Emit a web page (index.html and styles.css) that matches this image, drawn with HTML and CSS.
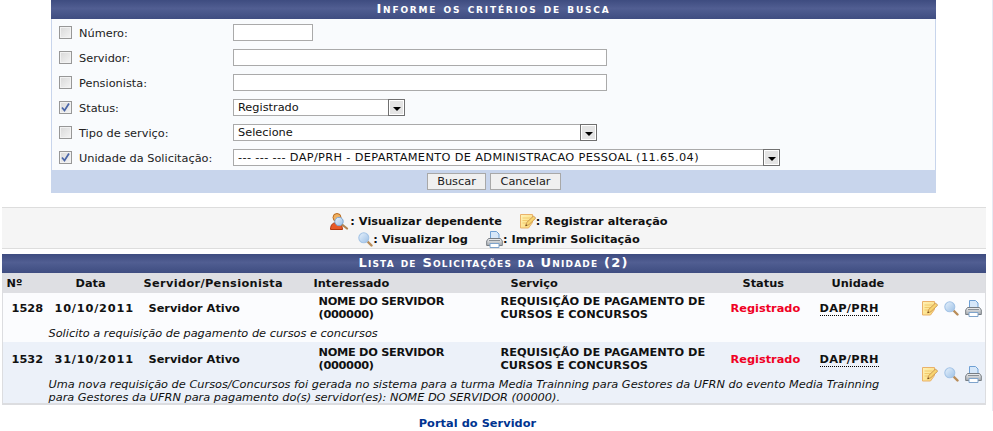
FILE: index.html
```html
<!DOCTYPE html>
<html lang="pt-BR">
<head>
<meta charset="utf-8">
<title>Lista de Solicitações</title>
<link rel="stylesheet" href="styles.css">
</head>
<body>
<svg class="defs" width="0" height="0" aria-hidden="true">
  <defs>
    <linearGradient id="lens" x1="0" y1="0" x2="1" y2="1"><stop offset="0" stop-color="#e8f2fc"/><stop offset="1" stop-color="#9cc0e6"/></linearGradient>
    <linearGradient id="note" x1="0" y1="0" x2="1" y2="1"><stop offset="0" stop-color="#fff3b8"/><stop offset="1" stop-color="#fad873"/></linearGradient>
    <linearGradient id="body" x1="0" y1="0" x2="0" y2="1"><stop offset="0" stop-color="#f0f2f4"/><stop offset="1" stop-color="#a4a9ae"/></linearGradient>
    <symbol id="i-note" viewBox="0 0 16 16">
      <path d="M.5 1.500h12v8l-4 5.500h-8z" fill="url(#note)" stroke="#eab26a"/>
      <path d="M2.500 5h8M2.500 7.500h6M2.500 10h4" stroke="#f2ca6c" fill="none"/>
      <path d="M5.500 13l1.200-3.500 6.800-6.500 2.200 2.200-6.800 6.500z" fill="#f8d470" stroke="#c08a48" stroke-width=".8"/>
      <path d="M5.500 13l.6-1.800 1.200 1.200z" fill="#5a3410"/>
    </symbol>
    <symbol id="i-lens" viewBox="0 0 15 15">
      <path d="M9.500 9.500l4 4" stroke="#b88c58" stroke-width="2.400" stroke-linecap="round"/>
      <circle cx="5.800" cy="5.800" r="5" fill="url(#lens)" stroke="#a4c4e6" stroke-width="1.100"/>
    </symbol>
    <symbol id="i-print" viewBox="0 0 17 17">
      <path d="M4.500.5h6l2.500 2.500v5h-8.500z" fill="#d6e7f9" stroke="#6fa0d4"/>
      <path d="M2.500 7.500h12l1.800 2.500v4.500h-15.600v-4.500z" fill="url(#body)" stroke="#777d83"/>
      <path d="M4 12.500h9v4h-9z" fill="#fff" stroke="#7fa4cc"/>
      <path d="M3 9.500h11" stroke="#8a9096"/>
    </symbol>
    <symbol id="i-user" viewBox="0 0 20 17">
      <circle cx="7" cy="4.500" r="4" fill="#f0b060" stroke="#b86a20"/>
      <path d="M.5 16.500c0-5 2.500-7 6.500-7s5 2 5.500 7z" fill="#e85a28" stroke="#b03810"/>
      <path d="M12 11.500l5 4" stroke="#b08450" stroke-width="2.200" stroke-linecap="round"/>
      <circle cx="9" cy="8.500" r="4.200" fill="url(#lens)" stroke="#7da6d2"/>
    </symbol>
  </defs>
</svg>

<div class="page">
  <form class="search">
    <h2 class="caption">Informe os critérios de busca</h2>
    <div class="field">
      <span class="cb"></span><label>Número:</label>
      <input class="text w-num" type="text">
    </div>
    <div class="field">
      <span class="cb"></span><label>Servidor:</label>
      <input class="text w-long" type="text">
    </div>
    <div class="field">
      <span class="cb"></span><label>Pensionista:</label>
      <input class="text w-long" type="text">
    </div>
    <div class="field">
      <span class="cb"><svg class="check" viewBox="0 0 9 9"><path d="M1 4.500l2.500 3L8 .5" fill="none" stroke="#4a66a8" stroke-width="1.700"/></svg></span><label>Status:</label>
      <div class="select w-status"><span class="value">Registrado</span><span class="arrow"><i></i></span></div>
    </div>
    <div class="field">
      <span class="cb"></span><label>Tipo de serviço:</label>
      <div class="select w-tipo"><span class="value">Selecione</span><span class="arrow"><i></i></span></div>
    </div>
    <div class="field">
      <span class="cb"><svg class="check" viewBox="0 0 9 9"><path d="M1 4.500l2.500 3L8 .5" fill="none" stroke="#4a66a8" stroke-width="1.700"/></svg></span><label>Unidade da Solicitação:</label>
      <div class="select w-unidade"><span class="value caps">--- --- --- DAP/PRH - DEPARTAMENTO DE ADMINISTRACAO PESSOAL (11.65.04)</span><span class="arrow"><i></i></span></div>
    </div>
    <div class="actions">
      <button class="btn w-buscar" type="button">Buscar</button>
      <button class="btn w-cancelar" type="button">Cancelar</button>
    </div>
  </form>

  <div class="legend">
    <div class="legend-line">
      <span class="item"><svg class="ic-user"><use href="#i-user"/></svg>: Visualizar dependente</span>
      <span class="item"><svg class="ic-note"><use href="#i-note"/></svg>: Registrar alteração</span>
    </div>
    <div class="legend-line">
      <span class="item"><svg class="ic-lens"><use href="#i-lens"/></svg>: Visualizar log</span>
      <span class="item"><svg class="ic-print"><use href="#i-print"/></svg>: Imprimir Solicitação</span>
    </div>
  </div>

  <section class="list">
    <h2 class="caption">Lista de Solicitações da Unidade (2)</h2>
    <div class="clip">
      <table class="grid">
        <colgroup>
          <col class="c1"><col class="c2"><col class="c3"><col class="c4"><col class="c5"><col class="c6"><col class="c7"><col class="c8">
        </colgroup>
        <thead>
          <tr>
            <th class="h1">Nº</th><th class="h2">Data</th><th class="h3">Servidor/Pensionista</th><th>Interessado</th><th class="h5">Serviço</th><th class="h6">Status</th><th class="h6">Unidade</th><th></th>
          </tr>
        </thead>
        <tbody class="odd">
          <tr class="main">
            <td class="num">1528</td><td class="date">10/10/2011</td><td class="serv">Servidor Ativo</td>
            <td class="inter">NOME DO SERVIDOR (000000)</td>
            <td class="servico">REQUISIÇÃO DE PAGAMENTO DE CURSOS E CONCURSOS</td>
            <td class="status">Registrado</td>
            <td class="unit"><abbr title="Departamento de Administração Pessoal">DAP/PRH</abbr></td>
            <td class="tools">
              <svg class="ic-note"><use href="#i-note"/></svg><svg class="ic-lens"><use href="#i-lens"/></svg><svg class="ic-print"><use href="#i-print"/></svg>
            </td>
          </tr>
          <tr class="desc">
            <td></td><td colspan="7">Solicito a requisição de pagamento de cursos e concursos</td>
          </tr>
        </tbody>
        <tbody class="even">
          <tr class="main">
            <td class="num">1532</td><td class="date">31/10/2011</td><td class="serv">Servidor Ativo</td>
            <td class="inter">NOME DO SERVIDOR (000000)</td>
            <td class="servico">REQUISIÇÃO DE PAGAMENTO DE CURSOS E CONCURSOS</td>
            <td class="status">Registrado</td>
            <td class="unit"><abbr title="Departamento de Administração Pessoal">DAP/PRH</abbr></td>
            <td class="tools" rowspan="2">
              <svg class="ic-note"><use href="#i-note"/></svg><svg class="ic-lens"><use href="#i-lens"/></svg><svg class="ic-print"><use href="#i-print"/></svg>
            </td>
          </tr>
          <tr class="desc">
            <td></td><td colspan="6">Uma nova requisição de Cursos/Concursos foi gerada no sistema para a turma Media Trainning para Gestores da UFRN do evento Media Trainning para Gestores da UFRN para pagamento do(s) servidor(es): NOME DO SERVIDOR (00000).</td>
          </tr>
        </tbody>
      </table>
    </div>
  </section>

  <div class="portal"><a href="#">Portal do Servidor</a></div>
</div>
</body>
</html>
```
FILE: styles.css
```css
* { box-sizing: border-box; }

html, body { margin: 0; padding: 0; background: #fff; }

body {
  height: 431px;
  overflow: hidden;
  font-family: "DejaVu Sans", Verdana, sans-serif;
  font-size: 11.33px;
  color: #222;
}

.defs { display: block; height: 0; }

.page {
  width: 993px;
  height: 411px;
  padding-right: 5px;
  border-right: 1px solid #e6eaf4;
}

.caption {
  margin: 0;
  height: 19px;
  line-height: 18px;
  text-align: center;
  font-size: 13px;
  font-weight: bold;
  font-variant: small-caps;
  letter-spacing: 1.2px;
  color: #fff;
  background: linear-gradient(#3e4c80 0, #515e92 45%, #4b598d 60%, #3f4d81 100%);
}

/* search form */
.search {
  width: 885px;
  margin: 0 auto;
  background: #f9fbfd;
  border-left: 1px solid #c8d5ec;
  border-right: 1px solid #c8d5ec;
}

.search .caption { margin: 0 -1px 1px; letter-spacing: 1.8px; }

.field {
  display: flex;
  align-items: center;
  height: 25px;
  padding-left: 7px;
}

.cb {
  flex: none;
  width: 13px;
  height: 13px;
  display: flex;
  align-items: center;
  justify-content: center;
  border: 1px solid #979797;
  background: linear-gradient(135deg, #d8d8d8, #f4f4f4);
  box-shadow: inset 0 0 0 1px #f2f2f2;
}

.check { width: 9px; height: 9px; }

.field label {
  flex: none;
  width: 154px;
  margin-left: 7px;
  color: #222;
}

.text, .select {
  flex: none;
  height: 17px;
  border: 1px solid #aaa;
  background: #fff;
  font: inherit;
  padding: 0 4px;
}

.w-num { width: 80px; }
.w-long { width: 374px; }
.w-status { width: 172px; }
.w-tipo { width: 364px; }
.w-unidade { width: 547px; }

.select {
  display: flex;
  align-items: stretch;
  justify-content: space-between;
  padding: 0 0 0 4px;
  line-height: 15px;
  color: #111;
}

.value { white-space: nowrap; overflow: hidden; }
.caps { letter-spacing: .35px; }

.arrow {
  flex: none;
  width: 17px;
  margin: -1px -1px -1px 0;
  border: 1px solid #707070;
  box-shadow: inset 0 0 0 1px #fff;
  background: #e4e4e4;
  display: flex;
  align-items: center;
  justify-content: center;
  padding-top: 3px;
}

.arrow i {
  display: block;
  width: 0;
  height: 0;
  border-left: 4px solid transparent;
  border-right: 4px solid transparent;
  border-top: 4px solid #000;
}

.actions {
  height: 23px;
  background: #c8d5ec;
  display: flex;
  justify-content: center;
  align-items: center;
  gap: 4px;
  margin: 0 -1px;
  padding-left: 1px;
}

.btn {
  height: 17px;
  padding: 0;
  border: 1px solid #a8a8a8;
  background: #f0f0f0;
  font: inherit;
  color: #222;
  line-height: 15px;
}

.w-buscar { width: 59px; }
.w-cancelar { width: 71px; }

/* legend */
.legend {
  width: 984px;
  height: 42px;
  margin: 14px auto 0;
  padding: 4px 0 0 11px;
  background: #f5f5f5;
  border-top: 1px solid #ddd;
  border-bottom: 1px solid #ddd;
  font-weight: bold;
  color: #111;
}

.legend-line {
  display: flex;
  justify-content: center;
  gap: 18px;
  height: 18px;
  line-height: 18px;
}

.item { display: flex; align-items: center; white-space: nowrap; }

.ic-user { width: 20px; height: 17px; }
.ic-note { width: 16px; height: 16px; }
.ic-lens { width: 15px; height: 15px; }
.ic-print { width: 17px; height: 17px; }

/* list */
.list { width: 984px; margin: 5px auto 0; }

.clip {
  height: 132px;
  overflow: hidden;
  border-bottom: 2px solid #dcdde0;
  border-left: 1px solid #dcdde0;
  border-right: 1px solid #dcdde0;
  background: #ecf1f9;
}

.grid {
  width: 982px;
  table-layout: fixed;
  border-collapse: collapse;
  color: #111;
}

.c1 { width: 46px; }
.c2 { width: 95px; }
.c3 { width: 170px; }
.c4 { width: 182px; }
.c5 { width: 230px; }
.c6 { width: 89px; }
.c7 { width: 101px; }
.c8 { width: 69px; }

th {
  height: 20px;
  padding: 0;
  background: #dedfe3;
  text-align: left;
  font-weight: bold;
  white-space: nowrap;
  color: #111;
}

.h1 { padding-left: 4px; }
.h2 { padding-left: 27px; }
.h3 { letter-spacing: .35px; }
.h5 { padding-left: 15px; }
.h6 { padding-left: 17px; }

td { padding: 0; vertical-align: middle; }

.odd { background: #fbfcfe; }
.even { background: #ecf1f9; }

.main { height: 30px; }
.even .main { height: 34px; }

.main td { font-weight: bold; line-height: 13px; }

.num { padding-left: 9px; }
.date { padding-left: 6px; letter-spacing: .8px; }
.serv { padding-left: 5px; }
.inter { padding-left: 5px; padding-right: 40px; letter-spacing: -.3px; }
.servico { padding-left: 5px; padding-right: 6px; }
.status { padding-left: 5px; }
.main .status { color: #f00024; }
.unit { padding-left: 5px; }

abbr {
  text-decoration: none;
  border-bottom: 1px dotted #000;
  cursor: help;
  letter-spacing: .3px;
}

.tools { padding-left: 6px; white-space: nowrap; }
.tools svg { vertical-align: middle; }
.tools .ic-lens { margin-left: 6px; }
.tools .ic-print { margin-left: 6px; }

.desc td {
  font-style: italic;
  line-height: 13px;
  padding-top: 4px;
  padding-bottom: 2px;
}

.even .desc td { padding-top: 2px; padding-right: 28px; }

.portal {
  margin-top: 12px;
  text-align: center;
  font-weight: bold;
  padding-right: 32px;
  line-height: 13px;
  letter-spacing: .05px;
}

.portal a { color: #003390; text-decoration: none; }
```
